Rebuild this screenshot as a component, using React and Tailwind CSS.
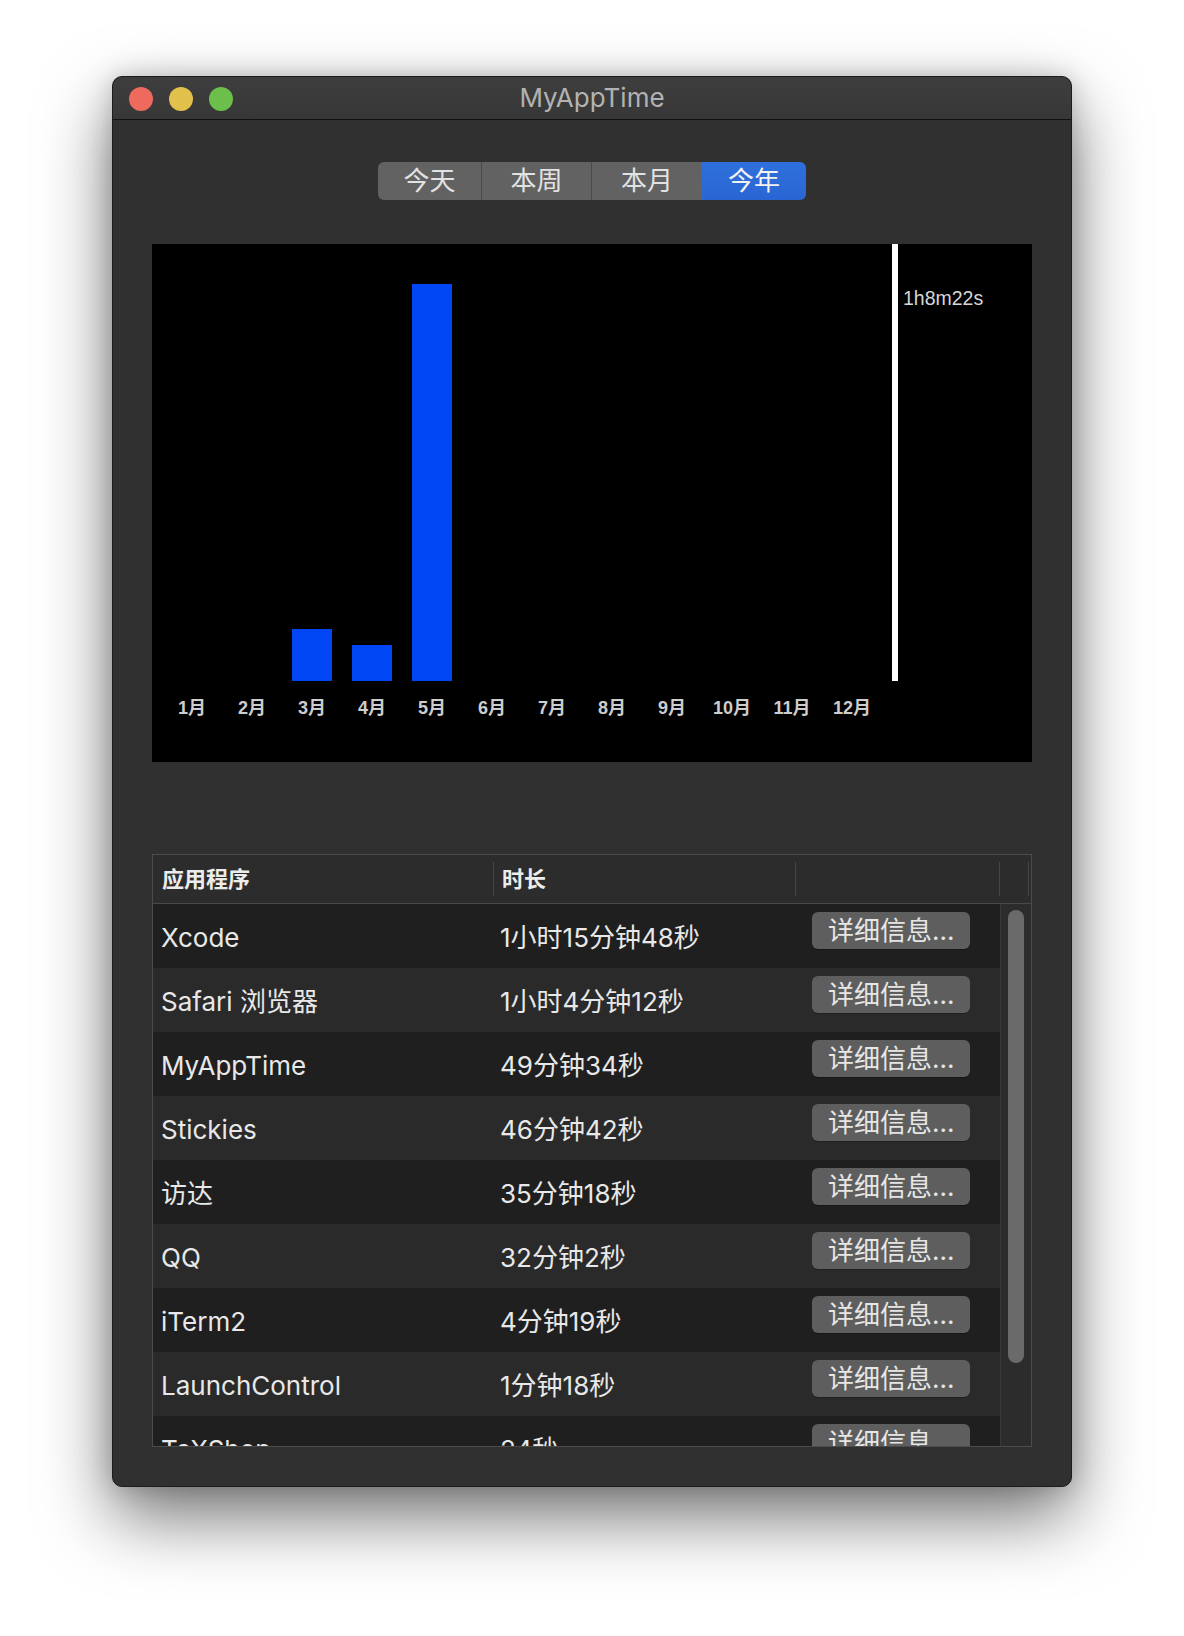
import React from "react";

const FONT = {
  fontFamily: 'Inter, "Noto Sans CJK SC", "Noto Sans", sans-serif',
};

const TABS = ["今天", "本周", "本月", "今年"];

const MONTHS = [
  { label: "1月", h: 0 },
  { label: "2月", h: 0 },
  { label: "3月", h: 52 },
  { label: "4月", h: 36 },
  { label: "5月", h: 397 },
  { label: "6月", h: 0 },
  { label: "7月", h: 0 },
  { label: "8月", h: 0 },
  { label: "9月", h: 0 },
  { label: "10月", h: 0 },
  { label: "11月", h: 0 },
  { label: "12月", h: 0 },
];

const APPS = [
  { name: "Xcode", time: "1小时15分钟48秒" },
  { name: "Safari 浏览器", time: "1小时4分钟12秒" },
  { name: "MyAppTime", time: "49分钟34秒" },
  { name: "Stickies", time: "46分钟42秒" },
  { name: "访达", time: "35分钟18秒" },
  { name: "QQ", time: "32分钟2秒" },
  { name: "iTerm2", time: "4分钟19秒" },
  { name: "LaunchControl", time: "1分钟18秒" },
  { name: "TeXShop", time: "24秒" },
];

function TitleBar() {
  return (
    <div className="relative h-[43px] flex items-center justify-center bg-gradient-to-b from-[#3e3e3e] to-[#373737] border-b border-[#121212] rounded-t-[10px]">
      <div className="absolute left-[16px] top-[10px] flex gap-[16px]">
        <span className="w-[24px] h-[24px] rounded-full bg-[#ee6a5e]" />
        <span className="w-[24px] h-[24px] rounded-full bg-[#e2c04c]" />
        <span className="w-[24px] h-[24px] rounded-full bg-[#6cbf4a]" />
      </div>
      <span className="text-[26px] leading-[30px] text-[#b2b2b2]">MyAppTime</span>
    </div>
  );
}

function Segments() {
  const widths = ["w-[103px]", "w-[110px]", "w-[111px]", "w-[104px]"];
  return (
    <div className="flex justify-center">
      <div className="flex h-[38px] rounded-[6px] overflow-hidden">
        {TABS.map((tab, i) => (
          <div
            key={tab}
            className={
              widths[i] +
              " flex items-center justify-center text-[26px] leading-[30px] " +
              (i === 3
                ? "bg-gradient-to-b from-[#2f70dc] to-[#2a66d3] text-[#f2f2f2]"
                : "bg-[#626262] text-[#e2e2e2]") +
              (i > 0 && i < 3 ? " border-l border-[#4a4a4a]" : "")
            }
          >
            {tab}
          </div>
        ))}
      </div>
    </div>
  );
}

function Chart() {
  return (
    <div
      className="w-[880px] h-[518px] bg-black flex pl-[10px] text-[#cdcdcd]"
      style={{ fontFamily: '"Liberation Sans", "Noto Sans CJK SC", sans-serif' }}
    >
      {MONTHS.map((m) => (
        <div key={m.label} className="w-[60px] flex flex-col">
          <div className="h-[437px] flex items-end justify-center">
            {m.h > 0 ? (
              <div className="w-[40px] bg-[#0046f5]" style={{ height: m.h }} />
            ) : null}
          </div>
          <div className="mt-[17px] text-center text-[18px] leading-[20px] font-semibold">
            {m.label}
          </div>
        </div>
      ))}
      <div className="ml-[10px] w-[6px] h-[437px] bg-white" />
      <div className="ml-[5px] mt-[43px] text-[19.5px] leading-[22px] text-[#d6d6d6]">
        1h8m22s
      </div>
    </div>
  );
}

function AppTable() {
  return (
    <div className="w-[880px] h-[593px] border border-[#4b4b4b] flex flex-col bg-[#2b2b2b]">
      <div className="h-[49px] flex items-center border-b border-[#484848] bg-[#2c2c2c] text-[22px] leading-[26px] font-bold text-[#ececec]">
        <div className="w-[340px] pl-[9px]">应用程序</div>
        <div className="w-px h-[34px] bg-[#464646]" />
        <div className="w-[301px] pl-[8px]">时长</div>
        <div className="w-px h-[34px] bg-[#464646]" />
        <div className="w-[203px]" />
        <div className="w-px h-[34px] bg-[#464646]" />
        <div className="w-[28px]" />
        <div className="w-px h-[34px] bg-[#464646]" />
      </div>
      <div className="flex-1 flex overflow-hidden">
        <div className="w-[847px] flex flex-col">
          {APPS.map((app, i) => (
            <div
              key={app.name}
              className={
                "h-[64px] shrink-0 flex text-[26px] leading-[30px] text-[#e8e8e8] " +
                (i % 2 === 0 ? "bg-[#1f1f1f]" : "bg-[#2a2a2a]")
              }
            >
              <div className="w-[340px] pl-[8px] pt-[19px]">{app.name}</div>
              <div className="w-[302px] pl-[7px] pt-[19px]">{app.time}</div>
              <div className="pl-[17px] pt-[8px]">
                <div className="w-[158px] h-[37px] rounded-[6px] bg-[#5e5e5e] pl-[16px] flex items-center text-[#e6e6e6] shadow-[0_1px_0_rgba(0,0,0,0.25)]">
                  详细信息...
                </div>
              </div>
            </div>
          ))}
        </div>
        <div className="w-[31px] border-l border-[#3a3a3a] bg-[#2c2c2c] pl-[7px] pt-[6px]">
          <div className="w-[16px] h-[453px] rounded-full bg-[#6a6a6a]" />
        </div>
      </div>
    </div>
  );
}

export default function App() {
  return (
    <div className="w-[1184px] h-[1636px] bg-white pt-[76px] pl-[112px]" style={FONT}>
      <div className="w-[960px] h-[1411px] rounded-[10px] bg-[#303030] border border-[#1c1c1c] shadow-[0_30px_70px_rgba(0,0,0,0.55),0_0_24px_rgba(0,0,0,0.18)] flex flex-col overflow-hidden">
        <TitleBar />
        <div className="mt-[42px]">
          <Segments />
        </div>
        <div className="mt-[44px] pl-[39px]">
          <Chart />
        </div>
        <div className="mt-[92px] pl-[39px]">
          <AppTable />
        </div>
      </div>
    </div>
  );
}
